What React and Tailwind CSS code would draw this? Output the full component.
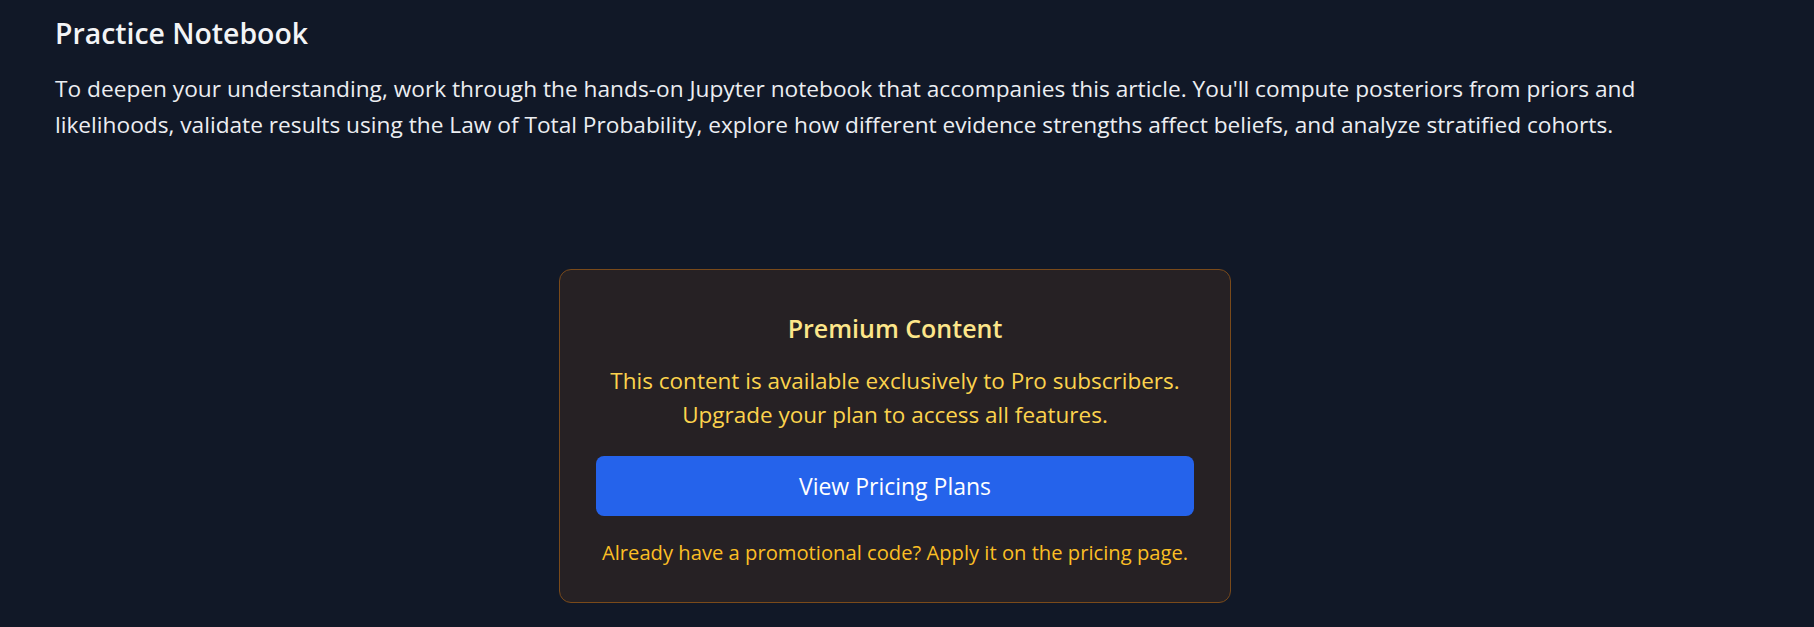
export default function App() {
  return (
    <div className="min-h-screen bg-[#111827] font-['Open_Sans',sans-serif]">
      <div className="w-[1680px] ml-[55px] pt-[15px]">
        {/* Practice notebook */}
        <h2 className="text-[28.4px] leading-[36px] font-semibold text-[#f3f4f6]">Practice Notebook</h2>
        <p className="mt-[20px] text-[22.7px] leading-[36px] text-[#eceef2]">
          To deepen your understanding, work through the hands-on Jupyter notebook that accompanies this article. You'll compute posteriors from priors and likelihoods, validate results using the Law of Total Probability, explore how different evidence strengths affect beliefs, and analyze stratified cohorts.
        </p>

        {/* Premium gate */}
        <div className="mt-[126px] mx-auto w-[672px] rounded-xl border border-[#7a4a1a] bg-[#262124] px-9 pt-[40px] pb-[36px] text-center">
          <h3 className="text-[25px] leading-[36px] font-semibold text-[#fde68a]">Premium Content</h3>
          <p className="mt-[18px] text-[22.5px] leading-[34px] text-[#fcd34d]">
            This content is available exclusively to Pro subscribers.<br />
            Upgrade your plan to access all features.
          </p>
          <button className="mt-[24px] w-full h-[60px] rounded-lg bg-[#2563eb] text-[23px] text-white">
            View Pricing Plans
          </button>
          <p className="mt-[22px] text-[20.2px] leading-[28px] text-[#fbbf24]">
            Already have a promotional code? Apply it on the pricing page.
          </p>
        </div>
      </div>
    </div>
  )
}
